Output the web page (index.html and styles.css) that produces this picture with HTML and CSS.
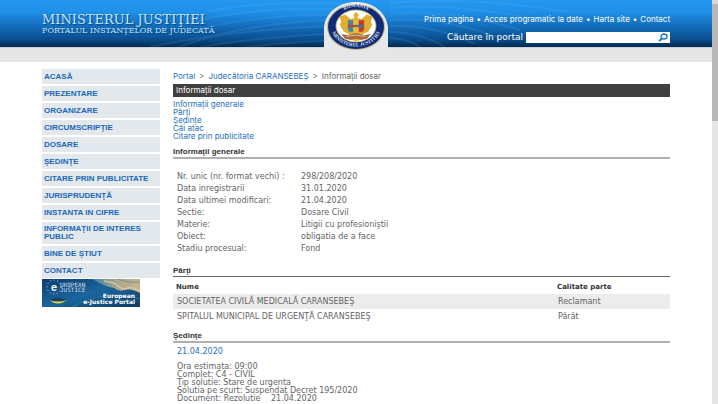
FILE: index.html
```html
<!DOCTYPE html>
<html lang="ro">
<head>
<meta charset="utf-8">
<title>Informaţii dosar</title>
<link rel="stylesheet" href="styles.css">
</head>
<body>
<div class="page">
  <header class="header">
    <svg class="rays" viewBox="0 0 712 47" preserveAspectRatio="none" aria-hidden="true">
      <g fill="none" stroke="#7cc4ff" stroke-opacity=".13" stroke-width="2">
        <path d="M150 47Q230 30 330 26M165 52Q240 22 335 20M180 34Q250 14 335 15M190 22Q260 6 340 9M210 11Q270 0 345 4M200 47Q260 37 325 34M240 48Q285 42 325 41"/>
        <path d="M390 8Q450 2 540 20M390 14Q450 9 520 30M390 20Q440 16 500 38M390 26Q430 24 475 44M390 32Q420 32 445 47M390 3Q470 -4 570 12M390 38Q408 39 420 47"/>
      </g>
    </svg>
    <div class="wrap header-row">
      <div class="brand">
        <p class="brand-name">MINISTERUL JUSTIŢIEI</p>
        <p class="brand-sub">PORTALUL INSTANŢELOR DE JUDECATĂ</p>
      </div>
      <div class="tools">
        <nav class="top-links">
          <a href="#">Prima pagina</a><span>•</span><a href="#">Acces programatic la date</a><span>•</span><a href="#">Harta site</a><span>•</span><a href="#">Contact</a>
        </nav>
        <form class="search">
          <label for="q">Căutare în portal</label>
          <input id="q" type="text">
          <button type="button" aria-label="Caută">
            <svg viewBox="0 0 14 11"><ellipse cx="8" cy="4.500" rx="3" ry="2.500" fill="#e8f5ff" stroke="#1878b8" stroke-width="1.300"/><path d="M6 6.500L3 9" stroke="#1878b8" stroke-width="1.800"/></svg>
          </button>
        </form>
      </div>
    </div>
    <svg class="emblem" viewBox="0 0 68 50" role="img" aria-label="România, Ministerul Justiţiei">
      <defs>
        <path id="arc-top" d="M12 26A22 19 0 0 1 56 26"/>
        <path id="arc-bottom" d="M9 26A25 20.500 0 0 0 59 26"/>
      </defs>
      <path d="M0 50Q2 49 2 46V27C4 12 17 2 34 2S64 12 66 27V46Q66 49 68 50Z" fill="#e6e8ea"/>
      <ellipse cx="34" cy="27" rx="29" ry="23" fill="#c5b77d"/>
      <ellipse cx="34" cy="27" rx="28" ry="22" fill="#102b79"/>
      <ellipse cx="34" cy="26" rx="20" ry="16" fill="#fff" stroke="#c5b77d" stroke-width=".8"/>
      <g transform="translate(34 26) scale(1.350 1.150) translate(-34 -26)">
        <path d="M34 14l2 2-1 3 3 1 4-4 4 2-1 4 1 3-3 6-4 2 2 4-7 2-7-2 2-4-4-2-3-6 1-3-1-4 4-2 4 4 3-1-1-3z" fill="#e3ad2f"/>
        <path d="M28 21h4v10h-3l-1-2z" fill="#3d86ae"/><path d="M32 21h4v11h-4z" fill="#e8bd3e"/><path d="M36 21h4v8l-1 2h-3z" fill="#c63b2e"/>
        <path d="M28 25h6v2h-6z" fill="#b9482d"/><path d="M34 25h6v2h-6z" fill="#367d99"/>
        <path d="M23 33l5 1 6-2 6 2 5-1-3 4-4 1-4-1-4 1-4-1z" fill="#a86840"/>
        <path d="M27 35l7-1 7 1" fill="none" stroke="#e8c9a5" stroke-width=".7"/>
      </g>
      <text class="seal-text"><textPath href="#arc-top" startOffset="50%">ROMANIA</textPath></text>
      <text class="seal-text"><textPath href="#arc-bottom" startOffset="50%">MINISTERUL JUSTITIEI</textPath></text>
    </svg>
  </header>
  <div class="strip"></div>

  <div class="wrap columns">
    <aside class="sidebar">
      <nav class="menu">
        <a href="#">ACASĂ</a>
        <a href="#">PREZENTARE</a>
        <a href="#">ORGANIZARE</a>
        <a href="#">CIRCUMSCRIPŢIE</a>
        <a href="#">DOSARE</a>
        <a href="#">ŞEDINŢE</a>
        <a href="#">CITARE PRIN PUBLICITATE</a>
        <a href="#">JURISPRUDENŢĂ</a>
        <a href="#">INSTANTA IN CIFRE</a>
        <a href="#">INFORMAŢII DE INTERES PUBLIC</a>
        <a href="#">BINE DE ŞTIUT</a>
        <a href="#">CONTACT</a>
      </nav>
      <a class="banner" href="#">
        <svg viewBox="0 0 98 28" role="img" aria-label="European e-Justice Portal">
          <defs>
            <linearGradient id="sea" x1="0" y1="0" x2="1" y2="1"><stop offset="0" stop-color="#0c3d70"/><stop offset=".5" stop-color="#1b659c"/><stop offset="1" stop-color="#0b3d66"/></linearGradient>
            <linearGradient id="sky" x1="0" y1="0" x2="1" y2="0"><stop offset="0" stop-color="#3b7fa8"/><stop offset=".5" stop-color="#a7a58c"/><stop offset="1" stop-color="#c8b48c"/></linearGradient>
          </defs>
          <rect width="98" height="28" fill="url(#sea)"/>
          <path d="M50 0H98V14Q89 9 83 11T72 9Q62 7 50 0Z" fill="url(#sky)"/>
          <path d="M62 2q10 1 14 5t10 2q7-1 12 4" fill="none" stroke="#e0d4b0" stroke-width="1.500" opacity=".7"/>
          <path d="M76 0q8 4 22 3M30 28Q60 10 98 20" fill="none" stroke="#407fa5" opacity=".6"/>
          <circle cx="12" cy="8" r="7" fill="none" stroke="#d3e3ef" stroke-width="1" stroke-dasharray="1 2.600"/>
          <path d="M7 21q9-5 18 0-9 6-18 0z" fill="#183f65"/><path d="M7 21q9 3 18 0-9 7-18 0z" fill="#e1d63c"/>
          <text class="ban-e" x="9" y="12">e</text>
          <text class="ban-small" x="18" y="8">UROPEAN</text>
          <text class="ban-small" x="18" y="13">JUSTICE</text>
          <text class="ban-big" x="93" y="19">European</text>
          <text class="ban-big" x="93" y="25">e-Justice Portal</text>
        </svg>
      </a>
    </aside>

    <main class="main">
      <nav class="crumbs"><a href="#">Portal</a><span>&gt;</span><a href="#">Judecătoria CARANSEBEŞ</a><span>&gt;</span>Informaţii dosar</nav>
      <h1 class="title">Informaţii dosar</h1>
      <nav class="anchors">
        <a href="#general">Informaţii generale</a>
        <a href="#parti">Părţi</a>
        <a href="#sedinte">Şedinţe</a>
        <a href="#cai">Căi atac</a>
        <a href="#citare">Citare prin publicitate</a>
      </nav>

      <h2 class="section" id="general">Informaţii generale</h2>
      <dl class="facts">
        <dt>Nr. unic (nr. format vechi) :</dt><dd>298/208/2020</dd>
        <dt>Data inregistrarii</dt><dd>31.01.2020</dd>
        <dt>Data ultimei modificari:</dt><dd>21.04.2020</dd>
        <dt>Sectie:</dt><dd>Dosare Civil</dd>
        <dt>Materie:</dt><dd>Litigii cu profesioniştii</dd>
        <dt>Obiect:</dt><dd>obligatia de a face</dd>
        <dt>Stadiu procesual:</dt><dd>Fond</dd>
      </dl>

      <h2 class="section thin" id="parti">Părţi</h2>
      <table class="parties">
        <thead><tr><th>Nume</th><th class="role">Calitate parte</th></tr></thead>
        <tbody>
          <tr class="odd"><td>SOCIETATEA CIVILĂ MEDICALĂ CARANSEBEŞ</td><td>Reclamant</td></tr>
          <tr><td>SPITALUL MUNICIPAL DE URGENŢĂ CARANSEBEŞ</td><td>Pârât</td></tr>
        </tbody>
      </table>

      <h2 class="section" id="sedinte">Şedinţe</h2>
      <article class="hearing">
        <h3><a href="#">21.04.2020</a></h3>
        <p>Ora estimata: 09:00</p>
        <p>Complet: C4 - CIVIL</p>
        <p>Tip solutie: Stare de urgenta</p>
        <p>Solutia pe scurt: Suspendat Decret 195/2020</p>
        <p>Document: Rezolutie <span class="doc-date">21.04.2020</span></p>
      </article>
    </main>
  </div>
</div>
<div class="scroll" aria-hidden="true"><div class="arrow"></div><div class="thumb"></div></div>
</body>
</html>
```
FILE: styles.css
```css
* { box-sizing: border-box; }
body, p, h1, h2, h3, dl, dd { margin: 0; }
html { height: 100%; }
body {
  display: flex;
  height: 100%;
  overflow: hidden;
  background: #fff;
  color: #646464;
  font: 8px/12px Inter, "Liberation Sans", Arial, sans-serif;
}
a { color: #1f6fc0; text-decoration: none; }
.page { flex: 1; min-width: 0; }
.wrap { max-width: 628px; margin: 0 auto; }

.header {
  position: relative;
  background: linear-gradient(#2497f0 0%, #2090e8 25%, #1268b4 60%, #0a4c8a 85%, #04294f 100%);
}
.rays { position: absolute; inset: 0; width: 100%; height: 100%; }
.header-row {
  position: relative;
  display: flex;
  justify-content: space-between;
  padding: 13px 0 4px;
}
.brand { color: #c4e4f8; font-family: "DejaVu Serif", serif; text-shadow: 1px 1px 1px #0b4680; }
.brand-name { font-size: 13px; line-height: 13px; }
.brand-sub { font-size: 8px; line-height: 10px; }
.tools { display: flex; flex-direction: column; align-items: flex-end; gap: 7px; color: #fff; }
.top-links { display: flex; gap: 3px; }
.top-links a { color: #fff; }
.search { display: flex; align-items: center; font: 9px/11px "DejaVu Sans", Verdana, sans-serif; }
.search label { margin-right: 3px; }
.search input { width: 130px; height: 11px; border: 0; padding: 0 2px; background: #fff; font: inherit; }
.search button { display: flex; width: 14px; height: 11px; border: 0; padding: 0; background: #fff; }
.search svg { width: 14px; height: 11px; }
.emblem { position: absolute; left: 50%; bottom: -3px; width: 68px; height: 50px; transform: translateX(-50%); }
.seal-text { fill: #dce2ee; font: bold 5px "Liberation Serif", serif; text-anchor: middle; }
.strip { height: 15px; background: #e6e6e6; border-top: 1px solid #c9d4dd; }

.columns { display: flex; gap: 13px; padding-top: 7px; }
.sidebar { flex: 0 0 118px; font-family: "Liberation Sans", Arial, sans-serif; }
.menu { display: flex; flex-direction: column; gap: 2px; }
.menu a { padding: 3px 2px; background: #e3e8ec; color: #1b67b8; font-weight: bold; line-height: 9px; }
.menu a:nth-child(10) { line-height: 8px; }
.banner { display: block; width: 98px; margin-top: 1px; }
.banner svg { display: block; width: 100%; }
.ban-e { fill: #fff; font: bold 11px "Liberation Sans", sans-serif; }
.ban-small { fill: #cfdde8; font: 6px "DejaVu Sans Mono", monospace; }
.ban-big { fill: #fff; font: bold 6px "DejaVu Sans", sans-serif; text-anchor: end; }

.main { flex: 1; min-width: 0; }
.crumbs { display: flex; gap: 4px; line-height: 14px; }
.title { margin-top: 1px; padding: 0 3px; background: #404040; color: #fff; font-size: 8px; line-height: 13px; font-weight: normal; }
.anchors { display: flex; flex-direction: column; align-items: flex-start; margin-top: 3px; line-height: 8px; }
.section {
  margin-top: 6px;
  border-bottom: 2px solid #b0b0b0;
  color: #333;
  font-family: "Liberation Sans", Arial, sans-serif;
  font-size: 8px;
  line-height: 11px;
}
.section.thin { border-bottom: 1px solid #666; }
.facts, .parties, .hearing { font-family: "DejaVu Sans", Verdana, sans-serif; }
.facts {
  display: grid;
  grid-template-columns: 124px 1fr;
  padding: 12px 4px 0;
  margin-bottom: 10px;
  line-height: 12px;
}
.parties { width: 100%; border-collapse: collapse; margin-top: 3px; }
.parties th { padding: 0 3px; color: #333; text-align: left; font-size: 7px; line-height: 14px; }
.parties td { padding: 0 4px; line-height: 15px; }
.parties .role { width: 116px; }
.odd { background: #ececec; }
.hearing { padding: 3px 4px 0; line-height: 8px; }
.hearing h3 { margin-bottom: 5px; font-size: inherit; font-weight: normal; line-height: 12px; }
.doc-date { margin-left: 8px; }

.scroll { flex: 0 0 6px; background: #e6e6e6; }
.arrow { height: 4px; background: #d8d8d8; }
.thumb { height: 29%; background: #b8b8b8; }
```
